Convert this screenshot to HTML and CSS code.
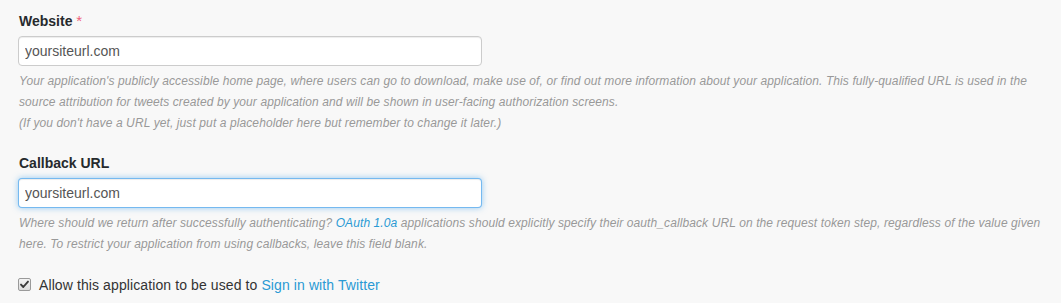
FILE: index.html
```html
<!DOCTYPE html>
<html>
<head>
<meta charset="utf-8">
<link rel="stylesheet" href="styles.css">
</head>
<body>
<form class="form">
  <div class="field">
    <label class="label" for="website">Website <span class="req">*</span></label>
    <input class="input" id="website" type="text" value="yoursiteurl.com">
    <p class="help">Your application's publicly accessible home page, where users can go to download, make use of, or find out more information about your application. This fully-qualified URL is used in the source attribution for tweets created by your application and will be shown in user-facing authorization screens.<br>(If you don't have a URL yet, just put a placeholder here but remember to change it later.)</p>
  </div>
  <div class="field">
    <label class="label" for="callback">Callback URL</label>
    <input class="input input-focus" id="callback" type="text" value="yoursiteurl.com">
    <p class="help">Where should we return after successfully authenticating? <a class="link" href="#">OAuth 1.0a</a> applications should explicitly specify their oauth_callback URL on the request token step, regardless of the value given here. To restrict your application from using callbacks, leave this field blank.</p>
  </div>
  <div class="check-row">
    <span class="checkbox"><svg width="13" height="13" viewBox="0 0 13 13"><path d="M3 6.6 L5.3 9 L10 3.6" fill="none" stroke="#3a3a3a" stroke-width="1.9" stroke-linecap="round" stroke-linejoin="round"/></svg></span>
    <span class="check-text">Allow this application to be used to <a class="link" href="#">Sign in with Twitter</a></span>
  </div>
</form>
</body>
</html>
```

FILE: styles.css
```css
html, body {
  margin: 0;
  padding: 0;
  background: #f8f8f8;
}
body {
  font-family: "Liberation Sans", Arial, sans-serif;
  color: #333;
}
.form {
  padding: 11px 18px 0 18px;
  width: 1025px;
}
.field {
  display: flex;
  flex-direction: column;
  align-items: flex-start;
  margin-bottom: 20px;
}
.label {
  font-size: 14px;
  line-height: 20px;
  font-weight: bold;
  color: #262a2d;
  margin-left: 1px;
  margin-bottom: 5px;
}
.req {
  color: #ee5f7a;
  font-weight: normal;
  font-size: 15px;
}
.input {
  box-sizing: border-box;
  width: 464px;
  height: 30px;
  margin: 0;
  padding: 0 6px;
  border: 1px solid #cccccc;
  border-radius: 4px;
  background: #fff;
  font-family: "Liberation Sans", Arial, sans-serif;
  font-size: 14px;
  color: #555;
  box-shadow: inset 0 1px 1px rgba(0,0,0,0.075);
  outline: none;
}
.input-focus {
  border-color: rgba(82,168,236,0.8);
  box-shadow: inset 0 1px 1px rgba(0,0,0,0.075), 0 0 6px rgba(82,168,236,0.6);
}
.help {
  margin: 5px 0 0 1px;
  font-size: 12px;
  line-height: 20.8px;
  font-style: italic;
  letter-spacing: 0.1px;
  color: #999;
}
.link {
  color: #2a9ad4;
  text-decoration: none;
}
.check-row {
  display: flex;
  align-items: center;
  gap: 8px;
  font-size: 14px;
  line-height: 20px;
  letter-spacing: 0.1px;
  color: #333;
}
.checkbox {
  display: inline-flex;
  box-sizing: border-box;
  width: 13px;
  height: 13px;
  border: 1px solid #9a9a9a;
  border-radius: 2px;
  background: linear-gradient(#f4f4f4, #dcdcdc);
  align-items: center;
  justify-content: center;
}
.checkbox svg {
  display: block;
  margin: -1px;
}
```
